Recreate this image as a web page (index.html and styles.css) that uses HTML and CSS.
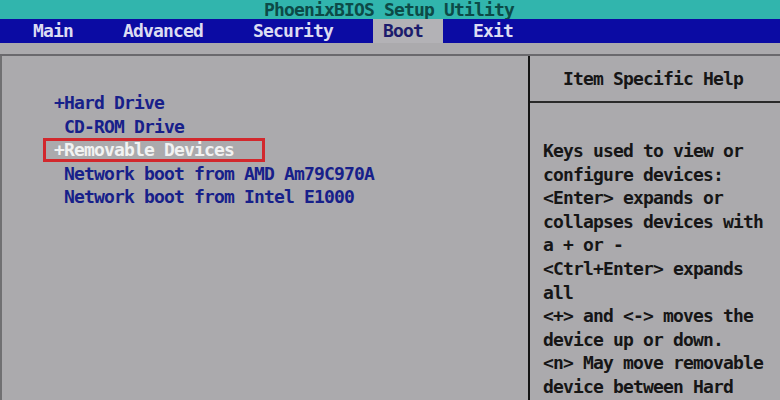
FILE: index.html
```html
<!DOCTYPE html>
<html lang="en">
<head>
    <meta charset="UTF-8">
    <meta name="viewport" content="width=device-width, initial-scale=1.0">
    <title>PhoenixBIOS Setup Utility - Boot</title>
    <link rel="stylesheet" href="styles.css">
</head>
<body>
    <div class="title-bar">PhoenixBIOS Setup Utility</div>
    <ul class="menu-bar">
        <li>Main</li>
        <li>Advanced</li>
        <li>Security</li>
        <li class="active">Boot</li>
        <li>Exit</li>
    </ul>
    <div class="gap"></div>
    <div class="screen">
        <div class="boot-list">
            <div class="item">+Hard Drive</div>
            <div class="item"> CD-ROM Drive</div>
            <div class="item"><span class="selected">+Removable Devices</span></div>
            <div class="item"> Network boot from AMD Am79C970A</div>
            <div class="item"> Network boot from Intel E1000</div>
        </div>
        <div class="help">
            <div class="help-title">Item Specific Help</div>
            <div class="help-text">
                <p>Keys used to view or</p>
                <p>configure devices:</p>
                <p>&lt;Enter&gt; expands or</p>
                <p>collapses devices with</p>
                <p>a + or -</p>
                <p>&lt;Ctrl+Enter&gt; expands</p>
                <p>all</p>
                <p>&lt;+&gt; and &lt;-&gt; moves the</p>
                <p>device up or down.</p>
                <p>&lt;n&gt; May move removable</p>
                <p>device between Hard</p>
            </div>
        </div>
    </div>
</body>
</html>
```

FILE: styles.css
```css
body {
    margin: 0;
    padding: 0;
    font-family: "DejaVu Sans Mono", "Liberation Mono", monospace;
    font-size: 18px;
    font-weight: bold;
    letter-spacing: -0.84px;
    background: #abaaad;
    height: 400px;
    overflow: hidden;
    display: flex;
    flex-direction: column;
}

.title-bar {
    height: 19px;
    line-height: 19px;
    padding-left: 264px;
    background: #31b5ad;
    color: #0c4a47;
    white-space: pre;
}

.menu-bar {
    list-style: none;
    margin: 0;
    padding: 0 0 0 23px;
    display: flex;
    gap: 20px;
    height: 24px;
    line-height: 24px;
    background: #0b0ba3;
    color: #dcdcf2;
}

.menu-bar li {
    padding: 0 20px 0 10px;
}

.menu-bar li.active {
    background: #b3b2b6;
    color: #1c1c6c;
}

.gap {
    height: 11px;
    border-bottom: 2px solid #6a696d;
}

.screen {
    flex: 1;
    display: flex;
    border-left: 2px solid #707072;
}

.boot-list {
    width: 528px;
    padding: 35px 0 0 52px;
    box-sizing: border-box;
    border-right: 2px solid #141414;
    color: #17208a;
}

.item {
    height: 23.6px;
    line-height: 23.6px;
    white-space: pre;
}

.selected {
    display: inline-block;
    line-height: 17.6px;
    margin-left: -11px;
    padding: 0 28px 0 8px;
    border: 3px solid #d2282d;
    color: #f2f2f2;
}

.help {
    flex: 1;
    display: flex;
    flex-direction: column;
    color: #161616;
}

.help-title {
    height: 45px;
    line-height: 45px;
    padding-left: 33px;
    border-bottom: 2px solid #2a2a2a;
    white-space: pre;
}

.help-text {
    padding: 36px 0 0 13px;
}

.help-text p {
    margin: 0;
    height: 23.6px;
    line-height: 23.6px;
    white-space: pre;
}
```
